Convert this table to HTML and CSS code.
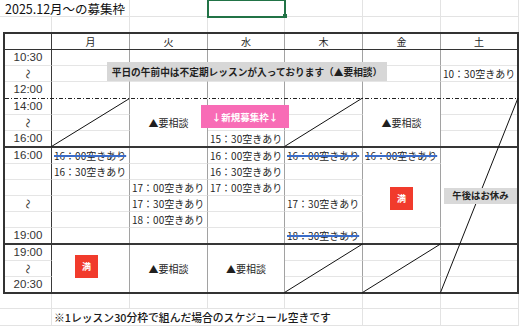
FILE: index.html
```html
<!DOCTYPE html>
<html lang="ja">
<head>
<meta charset="utf-8">
<title>2025.12月～の募集枠</title>
<link rel="stylesheet" href="styles.css">
</head>
<body>
<div class="sheet">
  <div class="top">
    <div class="g title">2025.12月～の募集枠</div>
    <div class="g"></div>
    <div class="g sel"></div>
    <div class="g"></div><div class="g"></div><div class="g"></div>
    <div class="g"></div><div class="g"></div><div class="g"></div><div class="g"></div><div class="g"></div><div class="g"></div><div class="g"></div>
  </div>

  <div class="table">
    <div class="row7 hdr">
      <div class="c t"></div><div class="c">月</div><div class="c">火</div><div class="c">水</div><div class="c">木</div><div class="c">金</div><div class="c">土</div>
    </div>

    <div class="blk">
      <div class="row7 a">
        <div class="c t">10:30</div><div class="c"></div><div class="c"></div><div class="c"></div><div class="c"></div><div class="c"></div><div class="c"></div>
        <div class="c t"><span class="wave">～</span></div><div class="c"></div><div class="c"></div><div class="c"></div><div class="c"></div><div class="c"></div><div class="c">10：30空きあり</div>
        <div class="c t">12:00</div><div class="c"></div><div class="c"></div><div class="c"></div><div class="c"></div><div class="c"></div><div class="c"></div>
      </div>
    </div>
    <div class="dash"></div>

    <div class="blk thick">
      <div class="row7 b">
        <div class="c t">14:00</div><div class="c"></div><div class="c m s3">▲要相談</div><div class="c"></div><div class="c"></div><div class="c m s3">▲要相談</div><div class="c"></div>
        <div class="c t"><span class="wave">～</span></div><div class="c"></div><div class="c"></div><div class="c"></div><div class="c"></div>
        <div class="c t">16:00</div><div class="c"></div><div class="c">15：30空きあり</div><div class="c"></div><div class="c"></div>
      </div>
    </div>

    <div class="blk thick">
      <div class="row7 cc">
        <div class="c t">16:00</div><div class="c"><span class="st">16：00空きあり</span></div><div class="c"></div><div class="c">16：00空きあり</div><div class="c"><span class="st">16：00空きあり</span></div><div class="c"><span class="st">16：00空きあり</span></div><div class="c s6 restcell"><div class="rest">午後はお休み</div></div>
        <div class="c t"></div><div class="c">16：30空きあり</div><div class="c"></div><div class="c">16：30空きあり</div><div class="c"></div><div class="c m s4 fullfri"><div class="full">満</div></div>
        <div class="c t"></div><div class="c"></div><div class="c">17：00空きあり</div><div class="c">17：00空きあり</div><div class="c"></div>
        <div class="c t"><span class="wave">～</span></div><div class="c"></div><div class="c">17：30空きあり</div><div class="c"></div><div class="c">17：30空きあり</div>
        <div class="c t"></div><div class="c"></div><div class="c">18：00空きあり</div><div class="c"></div><div class="c"></div>
        <div class="c t">19:00</div><div class="c"></div><div class="c"></div><div class="c"></div><div class="c"><span class="st">18：30空きあり</span></div><div class="c"></div>
      </div>
    </div>

    <div class="blk">
      <div class="row7 d">
        <div class="c t">19:00</div><div class="c m s3 fullmon"><div class="full">満</div></div><div class="c m s3">▲要相談</div><div class="c m s3">▲要相談</div><div class="c"></div><div class="c"></div><div class="c"></div>
        <div class="c t"><span class="wave">～</span></div><div class="c"></div><div class="c"></div><div class="c"></div>
        <div class="c t">20:30</div><div class="c"></div><div class="c"></div><div class="c"></div>
      </div>
    </div>
  </div>

  <div class="bottom">
    <div class="g"></div><div class="g"></div><div class="g"></div><div class="g"></div><div class="g"></div><div class="g"></div><div class="g"></div>
    <div class="g"></div><div class="g note">※1レッスン30分枠で組んだ場合のスケジュール空きです</div><div class="g"></div><div class="g"></div>
  </div>

  <svg class="lines" width="520" height="327" viewBox="0 0 520 327" aria-hidden="true">
    <line x1="51.5" y1="146.5" x2="129.5" y2="98.5"/>
    <line x1="284.5" y1="146.5" x2="362.5" y2="98"/>
    <line x1="518" y1="98" x2="440.5" y2="292.5"/>
    <line x1="284.5" y1="292.5" x2="362.5" y2="244"/>
    <line x1="362.5" y1="292.5" x2="440.5" y2="244"/>
  </svg>

  <div class="ov banner">平日の午前中は不定期レッスンが入っております（▲要相談）</div>
  <div class="ov pink">↓新規募集枠↓</div>
</div>
</body>
</html>
```

FILE: styles.css
```css
* {
  box-sizing: border-box;
  margin: 0;
  padding: 0;
}

body {
  margin: 0;
  background: #fff;
  font-family: "Noto Sans CJK JP", "Noto Sans", sans-serif;
  color: #1f1f1f;
}

.sheet {
  position: relative;
  width: 520px;
  height: 327px;
  overflow: hidden;
}

/* surrounding spreadsheet grid */
.top,
.bottom {
  display: grid;
  grid-template-columns: 52px 78px 78px 77px 78px 78px 78px;
}

.top {
  height: 32px;
  overflow: hidden;
  grid-template-rows: 17px 16px;
}

.bottom {
  grid-template-rows: 15px 17px;
}

.g {
  border-right: 1px solid #e3e3e3;
  border-bottom: 1px solid #e3e3e3;
}

.title {
  grid-column: span 2;
  display: flex;
  align-items: center;
  padding-left: 5px;
  font-size: 12.5px;
  color: #111;
  white-space: nowrap;
}

.sel {
  position: relative;
  outline: 2px solid #217346;
  outline-offset: -1px;
}

.sel::after {
  content: "";
  position: absolute;
  right: -3px;
  bottom: -2px;
  width: 4px;
  height: 4px;
  background: #217346;
}

.note {
  grid-column: span 4;
  display: flex;
  align-items: center;
  padding-left: 2px;
  font-size: 10.8px;
  font-weight: 500;
  color: #1a1a1a;
  white-space: nowrap;
}

/* the schedule table */
.table {
  margin-left: 3px;
  width: 516px;
  border: 2px solid #333;
  overflow: hidden;
}

.row7 {
  display: grid;
  grid-template-columns: 47px 78px 78px 77px 78px 78px 77px;
  margin-right: -1px;
}

.hdr {
  height: 16px;
  border-bottom: 1px solid #333;
}

.hdr .c {
  border-bottom: 0;
  justify-content: center;
  padding-left: 0;
}

.blk {
  overflow: hidden;
}

.blk > .row7 {
  margin-bottom: -1px;
}

.blk.thick {
  border-bottom: 2px solid #363636;
}

.a {
  grid-template-rows: 16px 16px 17px;
}

.b,
.d {
  grid-template-rows: repeat(3, 16px);
}

.cc {
  grid-template-rows: repeat(6, 16px);
}

.dash {
  height: 1px;
  background: repeating-linear-gradient(90deg, #222 0 4px, transparent 4px 6px, #222 6px 7px, transparent 7px 9px);
}

.c {
  display: flex;
  align-items: center;
  padding-left: 2px;
  border-right: 1px solid #a2a2a2;
  border-bottom: 1px solid #e5e5e5;
  font-size: 10px;
  line-height: 1;
  white-space: nowrap;
  color: #1f1f1f;
}

.t {
  justify-content: center;
  padding-left: 0;
  border-right-color: #3a3a3a;
  font-family: "Liberation Sans", Arial, sans-serif;
  font-size: 11.5px;
  color: #333;
}

.wave {
  display: inline-block;
  transform: rotate(90deg);
  font-family: "Noto Sans CJK JP", sans-serif;
  font-size: 10px;
}

.m {
  justify-content: center;
  padding-left: 0;
}

.s3 { grid-row: span 3; }
.s4 { grid-row: span 4; }
.s6 { grid-row: span 6; }

.st {
  text-decoration-line: line-through;
  text-decoration-color: #3a6cc8;
  text-decoration-thickness: 1.5px;
}

.full {
  width: 23px;
  height: 23px;
  display: flex;
  align-items: center;
  justify-content: center;
  background: #f13b2c;
  color: #fff;
  font-size: 9px;
  font-weight: 700;
}

.fullfri {
  padding-top: 5px;
}

.fullmon {
  padding-right: 8px;
  padding-bottom: 5px;
}

.restcell {
  padding-left: 3px;
}

.rest {
  position: relative;
  z-index: 2;
  width: 73px;
  height: 16px;
  display: flex;
  align-items: center;
  justify-content: center;
  background: #d9d9d9;
  font-size: 9.4px;
  font-weight: 700;
  color: #222;
}

/* overlays */
.lines {
  position: absolute;
  left: 0;
  top: 0;
  z-index: 1;
}

.lines line {
  stroke: #111;
  stroke-width: 1;
}

.ov {
  position: absolute;
  z-index: 3;
  display: flex;
  align-items: center;
  justify-content: center;
  white-space: nowrap;
  font-weight: 700;
}

.banner {
  left: 107px;
  top: 62px;
  width: 280px;
  height: 19px;
  background: #d7d7d7;
  font-size: 9.7px;
  color: #1f1f1f;
}

.pink {
  left: 201px;
  top: 105px;
  width: 88px;
  height: 23px;
  background: #f86cb6;
  font-size: 9.5px;
  color: #fff;
}
```
